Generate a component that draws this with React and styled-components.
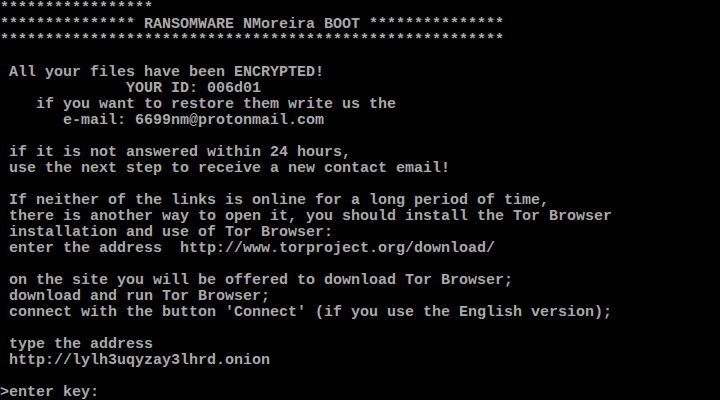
import React from "react";
import styled, { createGlobalStyle } from "styled-components";

const Global = createGlobalStyle`
  html, body {
    margin: 0;
    padding: 0;
    background: #000;
  }
  #root {
    width: 720px;
    height: 400px;
    overflow: hidden;
  }
`;

const Screen = styled.div`
  width: 720px;
  height: 400px;
  background: #000;
  display: flex;
  flex-direction: column;
  font-family: "Liberation Mono", "DejaVu Sans Mono", monospace;
  font-size: 15px;
  font-weight: bold;
  color: #a9a9a9;
`;

const Line = styled.div`
  height: 16px;
  line-height: 16px;
  padding-top: 1px;
  box-sizing: border-box;
  white-space: pre;
  padding-left: ${(p) => (p.$indent || 0) * 9}px;
`;

const lines = [
  [0, "*****************"],
  [0, "*************** RANSOMWARE NMoreira BOOT ***************"],
  [0, "********************************************************"],
  [0, ""],
  [1, "All your files have been ENCRYPTED!"],
  [14, "YOUR ID: 006d01"],
  [4, "if you want to restore them write us the"],
  [7, "e-mail: 6699nm@protonmail.com"],
  [0, ""],
  [1, "if it is not answered within 24 hours,"],
  [1, "use the next step to receive a new contact email!"],
  [0, ""],
  [1, "If neither of the links is online for a long period of time,"],
  [1, "there is another way to open it, you should install the Tor Browser"],
  [1, "installation and use of Tor Browser:"],
  [1, "enter the address  http://www.torproject.org/download/"],
  [0, ""],
  [1, "on the site you will be offered to download Tor Browser;"],
  [1, "download and run Tor Browser;"],
  [1, "connect with the button 'Connect' (if you use the English version);"],
  [0, ""],
  [1, "type the address"],
  [1, "http://lylh3uqyzay3lhrd.onion"],
  [0, ""],
  [0, ">enter key:"],
];

export default function App() {
  return (
    <>
      <Global />
      <Screen>
        {lines.map(([indent, text], i) => (
          <Line key={i} $indent={indent}>
            {text}
          </Line>
        ))}
      </Screen>
    </>
  );
}
